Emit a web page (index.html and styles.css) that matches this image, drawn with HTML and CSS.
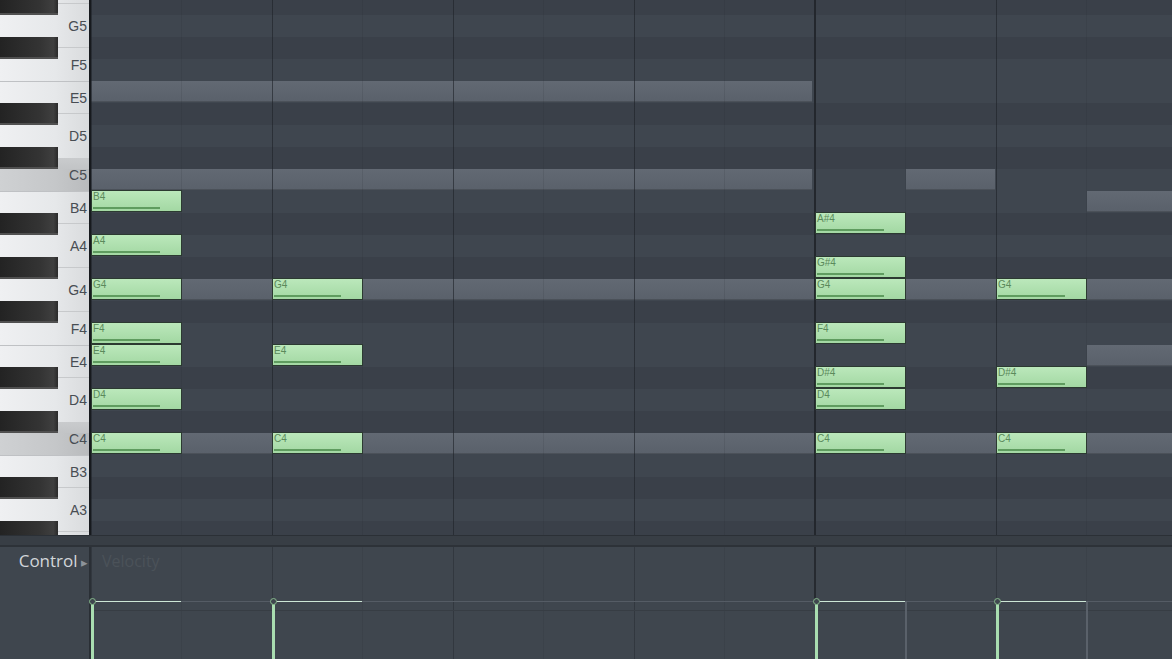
FILE: index.html
```html
<!DOCTYPE html>
<html lang="en">
<head>
  <meta charset="UTF-8">
  <meta name="viewport" content="width=device-width, initial-scale=1.0">
  <title>Piano Roll</title>
  <link rel="stylesheet" href="styles.css">
</head>
<body>
  <div class="roll">
    <div class="editor">
      <!-- Keyboard -->
      <div class="keys">
        <div class="key-stack">
          <div class="key b"><span class="black-key"></span></div>
          <div class="key w"><span class="lbl">G5</span></div>
          <div class="key b"><span class="black-key"></span></div>
          <div class="key w"><span class="lbl up">F5</span></div>
          <div class="key w edge"><span class="lbl down">E5</span></div>
          <div class="key b"><span class="black-key"></span></div>
          <div class="key w"><span class="lbl">D5</span></div>
          <div class="key b pre-hl"><span class="black-key"></span></div>
          <div class="key w hl"><span class="lbl up">C5</span></div>
          <div class="key w edge"><span class="lbl down">B4</span></div>
          <div class="key b"><span class="black-key"></span></div>
          <div class="key w"><span class="lbl">A4</span></div>
          <div class="key b"><span class="black-key"></span></div>
          <div class="key w"><span class="lbl">G4</span></div>
          <div class="key b"><span class="black-key"></span></div>
          <div class="key w"><span class="lbl up">F4</span></div>
          <div class="key w edge"><span class="lbl down">E4</span></div>
          <div class="key b"><span class="black-key"></span></div>
          <div class="key w"><span class="lbl">D4</span></div>
          <div class="key b pre-hl"><span class="black-key"></span></div>
          <div class="key w hl"><span class="lbl up">C4</span></div>
          <div class="key w edge"><span class="lbl down">B3</span></div>
          <div class="key b"><span class="black-key"></span></div>
          <div class="key w"><span class="lbl">A3</span></div>
          <div class="key b"><span class="black-key"></span></div>
        </div>
      </div>

      <!-- Note grid -->
      <div class="grid">
        <div class="grid-lines"></div>
        <div class="lanes">
          <div class="lane b"></div>
          <div class="lane w"></div>
          <div class="lane b"></div>
          <div class="lane w"></div>
          <div class="lane w">
            <div class="ghost" style="left:0;width:721px"></div>
          </div>
          <div class="lane b"></div>
          <div class="lane w"></div>
          <div class="lane b"></div>
          <div class="lane w">
            <div class="ghost" style="left:0;width:721px"></div>
            <div class="ghost" style="left:815px;width:89px"></div>
          </div>
          <div class="lane w">
            <div class="ghost" style="left:996px;width:100px"></div>
            <div class="note bar0"><span>B4</span></div>
          </div>
          <div class="lane b">
            <div class="note bar4"><span>A#4</span></div>
          </div>
          <div class="lane w">
            <div class="note bar0"><span>A4</span></div>
          </div>
          <div class="lane b">
            <div class="note bar4"><span>G#4</span></div>
          </div>
          <div class="lane w">
            <div class="ghost" style="left:0;width:1100px"></div>
            <div class="note bar0"><span>G4</span></div>
            <div class="note bar1"><span>G4</span></div>
            <div class="note bar4"><span>G4</span></div>
            <div class="note bar5"><span>G4</span></div>
          </div>
          <div class="lane b"></div>
          <div class="lane w">
            <div class="note bar0"><span>F4</span></div>
            <div class="note bar4"><span>F4</span></div>
          </div>
          <div class="lane w">
            <div class="ghost" style="left:996px;width:100px"></div>
            <div class="note bar0"><span>E4</span></div>
            <div class="note bar1"><span>E4</span></div>
          </div>
          <div class="lane b">
            <div class="note bar4"><span>D#4</span></div>
            <div class="note bar5"><span>D#4</span></div>
          </div>
          <div class="lane w">
            <div class="note bar0"><span>D4</span></div>
            <div class="note bar4"><span>D4</span></div>
          </div>
          <div class="lane b"></div>
          <div class="lane w">
            <div class="ghost" style="left:0;width:1100px"></div>
            <div class="note bar0"><span>C4</span></div>
            <div class="note bar1"><span>C4</span></div>
            <div class="note bar4"><span>C4</span></div>
            <div class="note bar5"><span>C4</span></div>
          </div>
          <div class="lane w"></div>
          <div class="lane b"></div>
          <div class="lane w"></div>
          <div class="lane b"></div>
        </div>
      </div>
    </div>

    <div class="divider"></div>

    <!-- Event editor -->
    <div class="control">
      <div class="control-label">Control <span class="arrow">&#9656;</span></div>
      <div class="control-grid">
        <span class="target">Velocity</span>
        <div class="level-line"></div>
        <div class="end-mark" style="left:814px"></div>
        <div class="end-mark" style="left:995px"></div>
        <div class="stem bar0"></div>
        <div class="stem bar1"></div>
        <div class="stem bar4"></div>
        <div class="stem bar5"></div>
      </div>
    </div>
  </div>
</body>
</html>
```

FILE: styles.css
```css
html, body {
  margin: 0;
  padding: 0;
  background: #3f464e;
  overflow: hidden;
}
.roll {
  width: 1172px;
  height: 659px;
  display: flex;
  flex-direction: column;
  font-family: "Liberation Sans", Arial, sans-serif;
}
.editor {
  display: flex;
  height: 535px;
  overflow: hidden;
}

/* keyboard */
.keys {
  width: 89px;
  border-right: 2px solid #171a1e;
  overflow: hidden;
  background: #e6e8ea;
}
.key-stack {
  margin-top: -7px;
}
.key {
  height: 22px;
  box-sizing: border-box;
  display: flex;
  align-items: center;
  justify-content: flex-end;
  background: linear-gradient(to right, #eff0f2 0%, #e6e8ea 62%, #d9dbdd 100%);
}
.key.b {
  justify-content: flex-start;
  background:
    linear-gradient(#c7c9cb, #c7c9cb) 58px 10px / 31px 1px no-repeat,
    linear-gradient(to right, #eff0f2 0%, #e6e8ea 62%, #d9dbdd 100%);
}
.key.b.pre-hl {
  background:
    linear-gradient(#c9cbcd, #c2c4c6) 58px 11px / 31px 11px no-repeat,
    linear-gradient(to right, #eff0f2 0%, #e6e8ea 62%, #d9dbdd 100%);
}
.key.edge {
  border-top: 1px solid #bfc1c4;
}
.key.hl {
  background: linear-gradient(to right, #cfd1d3 0%, #c5c7c9 62%, #b9bbbd 100%);
}
.black-key {
  width: 58px;
  height: 22px;
  box-sizing: border-box;
  background: linear-gradient(to right, #232323 0%, #343434 70%, #3f3f3f 92%, #2a2a2a 100%);
  border-bottom: 2px solid #505050;
}
.lbl {
  font-size: 14px;
  color: #484d53;
  padding-right: 2px;
  line-height: 16px;
}
.lbl.up {
  margin-bottom: 10px;
}
.lbl.down {
  margin-top: 10px;
}

/* grid */
.grid {
  flex: 1;
  position: relative;
  z-index: 0;
  overflow: hidden;
}
.grid-lines {
  position: absolute;
  inset: 0;
  z-index: 1;
  pointer-events: none;
  background:
    linear-gradient(#23272d, #23272d) 723px 0 / 2px 100% no-repeat,
    repeating-linear-gradient(to right,
      rgba(30, 34, 40, 0.62) 0 1px,
      transparent 1px 90px,
      rgba(30, 34, 40, 0.12) 90px 91px,
      transparent 91px 181px);
}
.lanes {
  margin-top: -7px;
}
.lane {
  height: 22px;
  position: relative;
  background: #3f464f;
}
.lane.b {
  background: #3a4049;
}
.ghost {
  position: absolute;
  top: 0;
  height: 21px;
  box-sizing: border-box;
  background: linear-gradient(#626973, #5a616b);
  border-bottom: 1px solid #4b5159;
}
.note {
  position: absolute;
  z-index: 2;
  top: -1px;
  width: 91px;
  height: 22px;
  box-sizing: border-box;
  border: 1px solid #2c3a31;
  background: linear-gradient(#bbe8bb, #a3d8a3);
}
.note span {
  display: block;
  font-size: 10px;
  line-height: 12px;
  color: #5b8a5b;
  padding-left: 1px;
}
.note::after {
  content: "";
  position: absolute;
  left: 1px;
  bottom: 2px;
  width: 67px;
  height: 2px;
  background: #5f9c5f;
}
.bar0 { left: 0; }
.bar1 { left: 181px; }
.bar4 { left: 724px; }
.bar5 { left: 905px; }

/* control strip */
.divider {
  height: 12px;
  box-sizing: border-box;
  background: #383e45;
  border-top: 1px solid #2b3036;
  border-bottom: 2px solid #2d3238;
}
.control {
  flex: 1;
  display: flex;
  background: #3f464e;
}
.control-label {
  width: 89px;
  border-right: 2px solid #2a2f35;
  padding-top: 4px;
  font-family: "Open Sans", "Noto Sans", sans-serif;
  font-size: 17px;
  line-height: 20px;
  color: #d2d6da;
  text-align: right;
  white-space: nowrap;
}
.arrow {
  font-size: 13px;
  color: #8d939a;
  margin-left: -1px;
  margin-right: 1px;
}
.control-grid {
  flex: 1;
  position: relative;
  background:
    linear-gradient(#262a30, #262a30) 723px 0 / 2px 54px no-repeat,
    repeating-linear-gradient(to right,
      rgba(30, 34, 40, 0.4) 0 1px,
      transparent 1px 90px,
      rgba(30, 34, 40, 0.12) 90px 91px,
      transparent 91px 181px);
}
.target {
  display: block;
  padding: 4px 0 0 11px;
  font-family: "Open Sans", "Noto Sans", sans-serif;
  font-size: 16px;
  line-height: 20px;
  color: #4b5259;
}
.level-line {
  position: absolute;
  left: 0;
  right: 0;
  top: 54px;
  height: 8px;
  border-top: 1px solid #555c65;
  border-bottom: 1px solid #373d44;
}
.end-mark {
  position: absolute;
  top: 54px;
  bottom: 0;
  width: 2px;
  background: #5a616a;
}
.stem {
  position: absolute;
  top: 54px;
  bottom: 0;
  width: 90px;
  border-top: 1px solid #cde6d6;
}
.stem::before {
  content: "";
  position: absolute;
  left: 0;
  top: -1px;
  bottom: 0;
  width: 3px;
  background: #a9ddb0;
}
.stem::after {
  content: "";
  position: absolute;
  left: -2px;
  top: -4px;
  width: 5px;
  height: 5px;
  border: 1.5px solid #86b98c;
  border-radius: 50%;
  background: #3f464e;
}
```
